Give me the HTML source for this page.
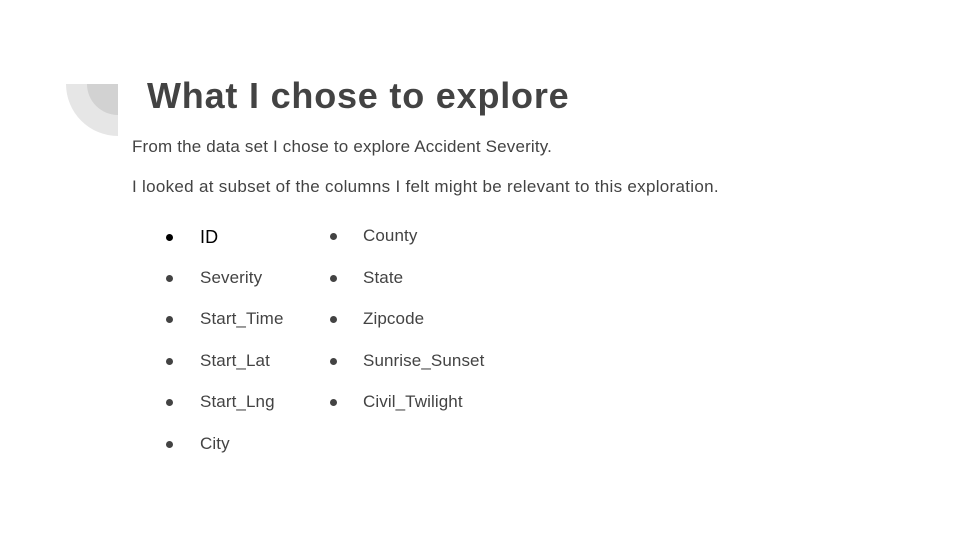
<!DOCTYPE html>
<html><head><meta charset="utf-8"><style>
body{margin:0;width:960px;height:540px;background:#fff;position:relative;overflow:hidden;font-family:"Liberation Sans",sans-serif;color:#434343}
.o{position:absolute;left:66px;top:84px;width:52px;height:52px;background:#e6e6e6;border-bottom-left-radius:52px}
.i{position:absolute;left:87px;top:84px;width:31px;height:31px;background:#d2d2d2;border-bottom-left-radius:31px}
h1{position:absolute;left:147px;top:75px;margin:0;font-size:36px;font-weight:bold;letter-spacing:0.8px}
p{position:absolute;left:132px;margin:0;font-size:17px;letter-spacing:0.17px}
.b{position:absolute;font-size:17px;letter-spacing:0.1px}
.d{position:absolute;width:7px;height:7px;border-radius:50%;background:#434343}
</style></head><body>
<div class="o"></div><div class="i"></div>
<h1>What I chose to explore</h1>
<p style="top:137px">From the data set I chose to explore Accident Severity.</p>
<p style="top:177px;letter-spacing:0.3px">I looked at subset of the columns I felt might be relevant to this exploration.</p>
<div class="d" style="left:166px;top:234px;background:#000"></div><div class="b" style="left:200px;top:227px;color:#000;font-size:18px">ID</div>
<div class="d" style="left:166px;top:275px"></div><div class="b" style="left:200px;top:268px">Severity</div>
<div class="d" style="left:166px;top:316px"></div><div class="b" style="left:200px;top:309px">Start_Time</div>
<div class="d" style="left:166px;top:358px"></div><div class="b" style="left:200px;top:351px">Start_Lat</div>
<div class="d" style="left:166px;top:399px"></div><div class="b" style="left:200px;top:392px">Start_Lng</div>
<div class="d" style="left:166px;top:441px"></div><div class="b" style="left:200px;top:434px">City</div>
<div class="d" style="left:330px;top:233px"></div><div class="b" style="left:363px;top:226px">County</div>
<div class="d" style="left:330px;top:275px"></div><div class="b" style="left:363px;top:268px">State</div>
<div class="d" style="left:330px;top:316px"></div><div class="b" style="left:363px;top:309px">Zipcode</div>
<div class="d" style="left:330px;top:358px"></div><div class="b" style="left:363px;top:351px">Sunrise_Sunset</div>
<div class="d" style="left:330px;top:399px"></div><div class="b" style="left:363px;top:392px">Civil_Twilight</div>
</body></html>
